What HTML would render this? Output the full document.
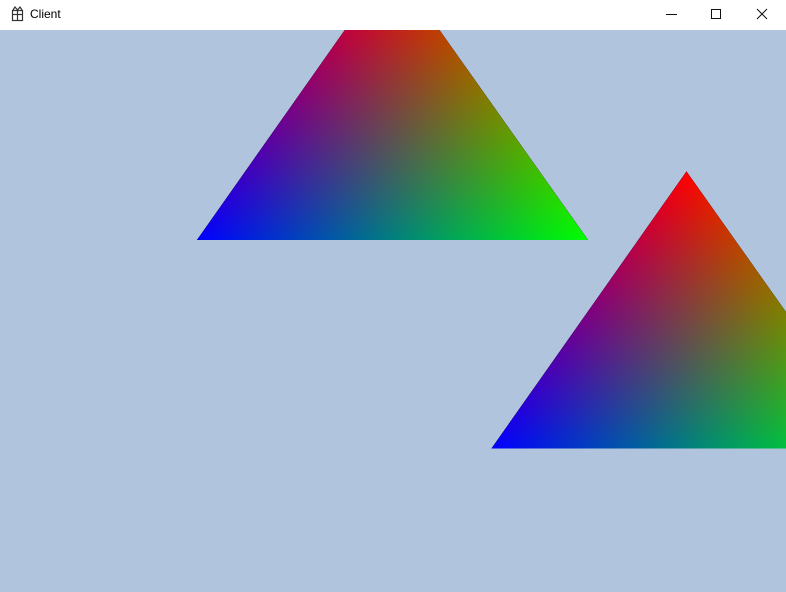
<!DOCTYPE html>
<html><head><meta charset="utf-8"><style>
html,body{margin:0;padding:0;width:786px;height:592px;overflow:hidden;background:#b0c4de;font-family:"Liberation Sans",sans-serif}
#tb{position:absolute;left:0;top:0;width:786px;height:30px;background:#fff}
#title{position:absolute;left:30px;top:7px;font-size:12px;color:#000}
svg{position:absolute;left:0;top:0}
</style></head><body>
<div id="tb">
<svg width="786" height="30">
 <g fill="none" stroke="#333" stroke-width="1.2">
  <rect x="12.5" y="10.5" width="10" height="10"/>
  <line x1="12" y1="14.5" x2="23" y2="14.5"/>
  <line x1="17.5" y1="10" x2="17.5" y2="21"/>
  <path d="M13 10 L15 7 L17.5 10 L20 7 L22 10"/>
 </g>
 <line x1="666" y1="14.5" x2="677" y2="14.5" stroke="#111" stroke-width="1"/>
 <rect x="711.5" y="9.5" width="9" height="9" fill="none" stroke="#111" stroke-width="1"/>
 <path d="M757 9 L767 19 M767 9 L757 19" stroke="#111" stroke-width="1"/>
</svg>
<div id="title">Client</div>
</div>
<svg width="786" height="592" style="top:0">
 <defs>
  <clipPath id="cp"><rect x="0" y="30" width="786" height="562"/></clipPath>
  <linearGradient id="gr" gradientUnits="userSpaceOnUse" x1="392" y1="-37" x2="392" y2="240">
   <stop offset="0" stop-color="#f00"/><stop offset="1" stop-color="#000"/></linearGradient>
  <linearGradient id="gg" gradientUnits="userSpaceOnUse" x1="588" y1="240" x2="326.56" y2="55.96">
   <stop offset="0" stop-color="#0f0"/><stop offset="1" stop-color="#000"/></linearGradient>
  <linearGradient id="gb" gradientUnits="userSpaceOnUse" x1="197" y1="240" x2="457.55" y2="55.64">
   <stop offset="0" stop-color="#00f"/><stop offset="1" stop-color="#000"/></linearGradient>
  <g id="tri" style="isolation:isolate">
   <polygon points="392,-37 197,240 588,240" fill="#000"/>
   <polygon points="392,-37 197,240 588,240" fill="url(#gr)" style="mix-blend-mode:screen"/>
   <polygon points="392,-37 197,240 588,240" fill="url(#gg)" style="mix-blend-mode:screen"/>
   <polygon points="392,-37 197,240 588,240" fill="url(#gb)" style="mix-blend-mode:screen"/>
  </g>
 </defs>
 <g clip-path="url(#cp)">
  <use href="#tri"/>
  <use href="#tri" transform="translate(294.5,208.5)"/>
 </g>
</svg>
</body></html>
